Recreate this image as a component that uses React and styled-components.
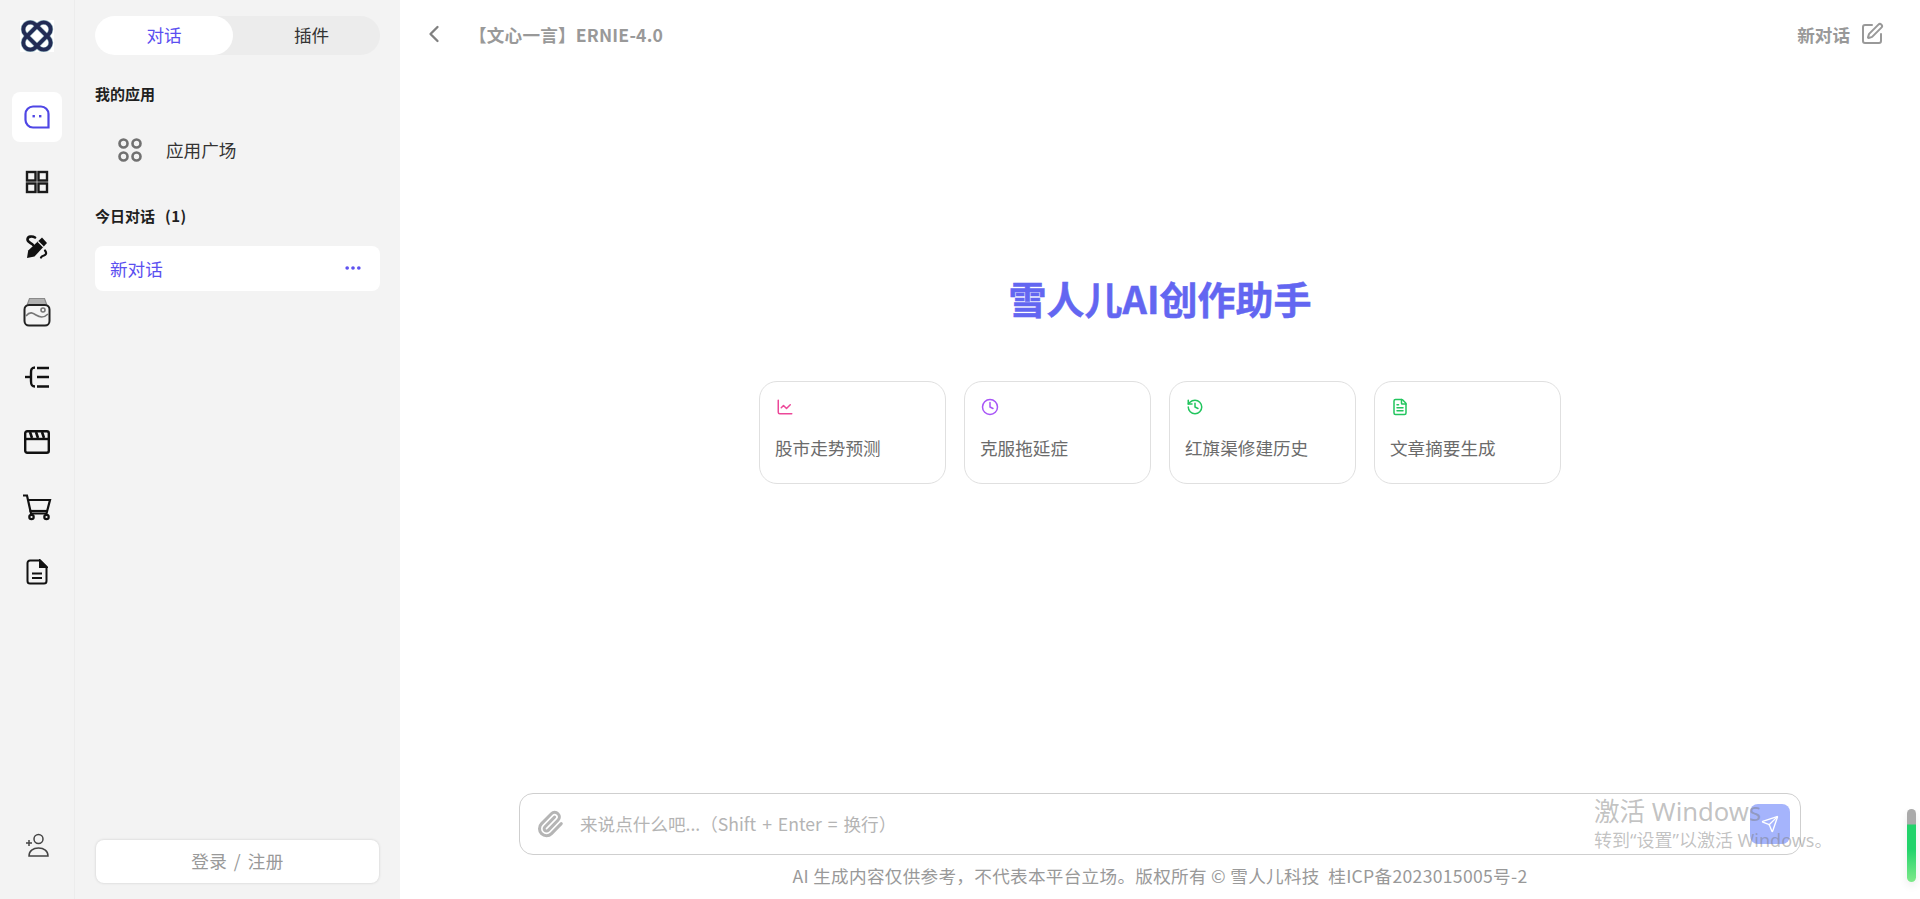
import React from 'react';
import styled, { createGlobalStyle } from 'styled-components';
import { Send, SquarePen, ChevronLeft, Paperclip, LineChart, Clock, History, FileText, Ellipsis } from 'lucide-react';

const FONT = '"Noto Sans CJK SC", "Noto Sans", Arial, sans-serif';
const INK = '#1f1f1f';

const GlobalStyle = createGlobalStyle`
  html, body { margin: 0; height: 100%; }
  body { font-family: ${FONT}; background: #fff; overflow: hidden; }
  #root { height: 100%; }
  * { box-sizing: border-box; }
`;

const Logo = () => (
  <LogoBox>
    <svg width="34" height="32" viewBox="0 0 34 32" fill="none">
      <rect x="0.500" y="9" width="33" height="14" rx="7" stroke="#9dbcc6" strokeWidth="5" transform="rotate(-45 17 16)" />
      <rect x="0.500" y="9" width="33" height="14" rx="7" stroke="#9dbcc6" strokeWidth="5" transform="rotate(45 17 16)" />
      <rect x="0.500" y="9" width="33" height="14" rx="7" stroke="#222c55" strokeWidth="3.800" transform="rotate(-45 17 16)" />
      <rect x="0.500" y="9" width="33" height="14" rx="7" stroke="#222c55" strokeWidth="3.800" transform="rotate(45 17 16)" />
    </svg>
  </LogoBox>
);

const ChatIcon = () => (
  <svg width="26" height="24" viewBox="0 0 26 24" fill="none">
    <path d="M9 1.500h8a7.500 7.500 0 0 1 7.500 7.500v13.500H9A7.500 7.500 0 0 1 1.500 15V9A7.500 7.500 0 0 1 9 1.500Z" stroke="#4f46e5" strokeWidth="2.200" />
    <rect x="8.500" y="10" width="2.400" height="2.400" fill="#4f46e5" />
    <rect x="15" y="10" width="2.400" height="2.400" fill="#4f46e5" />
  </svg>
);

const GridIcon = () => (
  <svg width="24" height="24" viewBox="0 0 24 24" fill="none" stroke="#1a1a1a" strokeWidth="2.400">
    <rect x="2" y="2" width="8.500" height="8.500" />
    <rect x="13.500" y="2" width="8.500" height="8.500" />
    <rect x="2" y="13.500" width="8.500" height="8.500" />
    <rect x="13.500" y="13.500" width="8.500" height="8.500" />
  </svg>
);

const PenIcon = () => (
  <svg width="24" height="24" viewBox="0 0 24 24" fill="none">
    <path d="M17 2.500l5 5.500L9.500 21.500 2 23l1.200-7.500Z" fill="#111" />
    <path d="M13 6.500l5.500 5.500" stroke="#f3f3f3" strokeWidth="1.300" />
    <path d="M10 2.500C7 .5 2.500 1.500 2.500 4.500S7 8 8 10" stroke="#111" strokeWidth="2.600" strokeLinecap="round" />
    <path d="M20 15.500c2 2.500 1 4.500-1 5s-2.500 1-3 2" stroke="#111" strokeWidth="2.200" strokeLinecap="round" />
  </svg>
);

const GalleryIcon = () => (
  <svg width="28" height="30" viewBox="0 0 28 30" fill="none">
    <path d="M6.500 1.500h15l2.500 7H4Z" fill="#b0b0b0" stroke="#8a8a8a" strokeWidth="1.200" />
    <rect x="1.500" y="8" width="25" height="20.500" rx="4.500" fill="#f4f4f4" stroke="#222" strokeWidth="2" />
    <path d="M3 19c4-5 7-3 10-1s7 4 12-1" stroke="#777" strokeWidth="1.600" />
    <circle cx="20" cy="13" r="2" stroke="#777" strokeWidth="1.600" />
  </svg>
);

const OutlineIcon = () => (
  <svg width="26" height="22" viewBox="0 0 26 22" fill="none" stroke="#111" strokeWidth="2.400">
    <path d="M11 1.500c-4 0-4 3-4 5.500v8c0 2.500 0 5.500 4 5.500" />
    <path d="M1 11h6" />
    <path d="M13 2h12M13 11h12M13 20.500h12" />
  </svg>
);

const FilmIcon = () => (
  <svg width="26" height="24" viewBox="0 0 26 24" fill="none">
    <rect x="1.200" y="1.200" width="23.600" height="21.600" rx="2" stroke="#111" strokeWidth="2.400" />
    <path d="M1 9h24" stroke="#111" strokeWidth="2.400" />
    <path d="M6 2l2 6M12 2l2 6M18 2l2 6" stroke="#111" strokeWidth="2.600" />
  </svg>
);

const CartIcon = () => (
  <svg width="30" height="27" viewBox="0 0 30 27" fill="none" stroke="#111" strokeWidth="2.200">
    <path d="M1 1.500h4l4 18h15.500L28 6H6.500" />
    <path d="M7.500 17h18" />
    <circle cx="9.500" cy="23" r="2.200" />
    <circle cx="24.500" cy="23" r="2.200" />
  </svg>
);

const DocIcon = () => (
  <svg width="22" height="26" viewBox="0 0 22 26" fill="none" stroke="#111" strokeWidth="2">
    <path d="M4 1.500h10l6.500 6.500v14a2.500 2.500 0 0 1-2.500 2.500H4A2.500 2.500 0 0 1 1.500 22V4A2.500 2.500 0 0 1 4 1.500Z" />
    <path d="M14 1.500l6.500 6.500H14Z" fill="#111" />
    <path d="M6 14.500h10M6 19h10" />
  </svg>
);

const AddUserIcon = () => (
  <svg width="24" height="24" viewBox="0 0 24 24" fill="none" stroke="#444" strokeWidth="1.500">
    <circle cx="13.500" cy="6" r="4.500" />
    <path d="M4 23c0-5 4-8 9.500-8s9.500 3 9.500 8Z" />
    <path d="M1 10h6M4 7v6" />
  </svg>
);

const AppsIcon = () => (
  <svg width="26" height="26" viewBox="0 0 26 26" fill="none" stroke="#707070" strokeWidth="2.600">
    <circle cx="6.500" cy="6.500" r="4" />
    <circle cx="19.500" cy="6.500" r="4" />
    <circle cx="6.500" cy="19.500" r="4" />
    <circle cx="19.500" cy="19.500" r="4" />
  </svg>
);

const navItems = [
  { key: 'chat', icon: <ChatIcon />, active: true },
  { key: 'grid', icon: <GridIcon /> },
  { key: 'pen', icon: <PenIcon /> },
  { key: 'gallery', icon: <GalleryIcon /> },
  { key: 'outline', icon: <OutlineIcon /> },
  { key: 'film', icon: <FilmIcon /> },
  { key: 'cart', icon: <CartIcon /> },
  { key: 'doc', icon: <DocIcon /> },
];

const prompts = [
  { text: '股市走势预测', Icon: LineChart, color: '#ec4899' },
  { text: '克服拖延症', Icon: Clock, color: '#a855f7' },
  { text: '红旗渠修建历史', Icon: History, color: '#22c55e' },
  { text: '文章摘要生成', Icon: FileText, color: '#22c55e' },
];

const App = () => {
  return (
    <Page>
      <GlobalStyle />
      <Rail>
        <Logo />
        <RailNav>
          {navItems.map(item => (
            <RailButton key={item.key} $active={item.active}>{item.icon}</RailButton>
          ))}
        </RailNav>
        <RailFoot><AddUserIcon /></RailFoot>
      </Rail>

      <Sidebar>
        <Toggle>
          <ToggleItem $active>对话</ToggleItem>
          <ToggleItem>插件</ToggleItem>
        </Toggle>
        <SectionLabel>我的应用</SectionLabel>
        <AppRow>
          <AppsIcon />
          <span>应用广场</span>
        </AppRow>
        <SectionLabel $second>今日对话<Count>(1)</Count></SectionLabel>
        <ChatRow>
          <span>新对话</span>
          <Ellipsis size={20} strokeWidth={2.400} />
        </ChatRow>
        <LoginButton>登录 / 注册</LoginButton>
      </Sidebar>

      <Main>
        <TopBar>
          <TopLeft>
            <ChevronLeft size={28} strokeWidth={2} color="#808080" />
            <ModelName>【文心一言】ERNIE-4.0</ModelName>
          </TopLeft>
          <NewChat>
            <span>新对话</span>
            <SquarePen size={24} strokeWidth={2} color="#999" />
          </NewChat>
        </TopBar>

        <Hero>
          <Title>雪人儿AI创作助手</Title>
          <Cards>
            {prompts.map(({ text, Icon, color }) => (
              <Card key={text}>
                <CardIcon><Icon size={18} color={color} strokeWidth={2} /></CardIcon>
                <CardText>{text}</CardText>
              </Card>
            ))}
          </Cards>
        </Hero>

        <Composer>
          <Paperclip size={28} color="#b5b5b5" strokeWidth={2.600} />
          <Placeholder>来说点什么吧...（Shift + Enter = 换行）</Placeholder>
          <SendButton><Send size={18} color="#fff" strokeWidth={1.800} /></SendButton>
        </Composer>
        <Footnote>AI 生成内容仅供参考，不代表本平台立场。版权所有 © 雪人儿科技&nbsp; 桂ICP备2023015005号-2</Footnote>
      </Main>

      <Watermark>
        <WatermarkTitle>激活 Windows</WatermarkTitle>
        <WatermarkSub>转到“设置”以激活 Windows。</WatermarkSub>
      </Watermark>
      <Meter />
    </Page>
  );
};

const Page = styled.div`
  display: flex;
  height: 100vh;
  position: relative;
  overflow: hidden;
`;

const Rail = styled.nav`
  width: 75px;
  flex: none;
  display: flex;
  flex-direction: column;
  align-items: center;
  background: #f3f3f3;
  border-right: 1px solid #ececec;
  padding: 20px 0 42px;
`;

const LogoBox = styled.div`
  width: 34px;
  height: 32px;
  background: #fff;
  display: flex;
`;

const RailNav = styled.div`
  display: flex;
  flex-direction: column;
  align-items: center;
  margin-top: 40px;
  gap: 15px;
`;

const RailButton = styled.div`
  width: 50px;
  height: 50px;
  border-radius: 8px;
  display: flex;
  align-items: center;
  justify-content: center;
  background: ${p => (p.$active ? '#fff' : 'transparent')};
`;

const RailFoot = styled.div`
  margin-top: auto;
  display: flex;
`;

const Sidebar = styled.aside`
  width: 325px;
  flex: none;
  background: #f3f3f3;
  display: flex;
  flex-direction: column;
  padding: 16px 20px;
`;

const Toggle = styled.div`
  height: 39px;
  display: flex;
  border-radius: 20px;
  background: #ececec;
`;

const ToggleItem = styled.div`
  flex: ${p => (p.$active ? '0 0 138px' : '1')};
  display: flex;
  align-items: center;
  justify-content: center;
  border-radius: 20px;
  font-size: 17.600px;
  padding: ${p => (p.$active ? '0 0 2px' : '0 0 2px 10px')};
  color: ${p => (p.$active ? '#5b4ff0' : '#333')};
  background: ${p => (p.$active ? '#fff' : 'transparent')};
`;

const SectionLabel = styled.div`
  margin-top: ${p => (p.$second ? '21px' : '28px')};
  font-size: 15px;
  font-weight: 700;
  line-height: 22px;
  color: ${INK};
`;

const Count = styled.span`
  margin-left: 10px;
  letter-spacing: 0.500px;
`;

const AppRow = styled.div`
  display: flex;
  align-items: center;
  gap: 23px;
  height: 68px;
  margin-top: 11px;
  padding: 0 0 1px 22px;
  font-size: 17.600px;
  color: #333;
`;

const ChatRow = styled.div`
  height: 45px;
  margin-top: 19px;
  padding: 0 17px 1px 15px;
  border-radius: 8px;
  background: #fff;
  display: flex;
  align-items: center;
  justify-content: space-between;
  font-size: 17.600px;
  color: #5b4ff0;
`;

const LoginButton = styled.div`
  margin: auto 1px 0;
  height: 43px;
  padding-bottom: 2px;
  border-radius: 8px;
  background: #fff;
  box-shadow: 0 0 3px rgba(0, 0, 0, 0.16);
  display: flex;
  align-items: center;
  justify-content: center;
  font-size: 17.600px;
  letter-spacing: 0.500px;
  word-spacing: 2px;
  color: #999;
`;

const Main = styled.main`
  flex: 1;
  min-width: 0;
  display: flex;
  flex-direction: column;
  align-items: center;
  padding-bottom: 10px;
`;

const TopBar = styled.header`
  align-self: stretch;
  height: 68px;
  display: flex;
  align-items: center;
  justify-content: space-between;
  padding: 0 36px 0 20px;
`;

const TopLeft = styled.div`
  display: flex;
  align-items: center;
  gap: 21px;
`;

const ModelName = styled.div`
  font-size: 17.600px;
  font-weight: 700;
  letter-spacing: 0.200px;
  color: #999;
`;

const NewChat = styled.div`
  display: flex;
  align-items: center;
  gap: 10px;
  font-size: 17.600px;
  font-weight: 700;
  color: #999;
`;

const Hero = styled.section`
  flex: 1;
  display: flex;
  flex-direction: column;
  align-items: center;
  padding-top: 201px;
`;

const Title = styled.h1`
  margin: 0;
  font-size: 38px;
  line-height: 58px;
  font-weight: 700;
  color: #6366f1;
  -webkit-text-stroke: 0.500px #6366f1;
`;

const Cards = styled.div`
  display: flex;
  gap: 18px;
  margin-top: 54px;
`;

const Card = styled.div`
  width: 187px;
  height: 103px;
  border: 1.500px solid #e0e0e0;
  border-radius: 18px;
  padding: 16px 15px;
  display: flex;
  flex-direction: column;
  gap: 19px;
`;

const CardIcon = styled.div`
  display: flex;
  margin-left: 1px;
`;

const CardText = styled.div`
  font-size: 17.600px;
  line-height: 26px;
  color: #6b6b6b;
`;

const Composer = styled.div`
  width: 1282px;
  height: 62px;
  border: 1.500px solid #cfcfcf;
  border-radius: 14px;
  display: flex;
  align-items: center;
  padding: 0 10px 0 16px;
  gap: 16px;
`;

const Placeholder = styled.div`
  flex: 1;
  font-size: 17.600px;
  word-spacing: 2px;
  padding-bottom: 1px;
  color: #b4b4b4;
`;

const SendButton = styled.div`
  width: 40px;
  height: 40px;
  border-radius: 8px;
  background: #a5b4fc;
  display: flex;
  align-items: center;
  justify-content: center;
`;

const Footnote = styled.div`
  margin-top: 8px;
  font-size: 17.600px;
  line-height: 26px;
  letter-spacing: 0.300px;
  color: #999;
`;

const Watermark = styled.div`
  position: absolute;
  left: 1594px;
  top: 795px;
  font-family: "Noto Sans", "Noto Sans CJK SC", sans-serif;
  color: rgba(120, 120, 120, 0.45);
  pointer-events: none;
`;

const WatermarkTitle = styled.div`
  font-size: 25.600px;
  line-height: 34px;
`;

const WatermarkSub = styled.div`
  font-size: 18px;
  line-height: 22px;
`;

const Meter = styled.div`
  position: absolute;
  left: 1907px;
  top: 809px;
  width: 9px;
  height: 73px;
  border-radius: 5px;
  box-shadow: 0 4px 8px rgba(0, 0, 0, 0.08);
  background: linear-gradient(to bottom, #aaa 0, #aaa 15px, #22d36b 16px, #22d36b 40px, #7fe98a 100%);
`;

export default App;
